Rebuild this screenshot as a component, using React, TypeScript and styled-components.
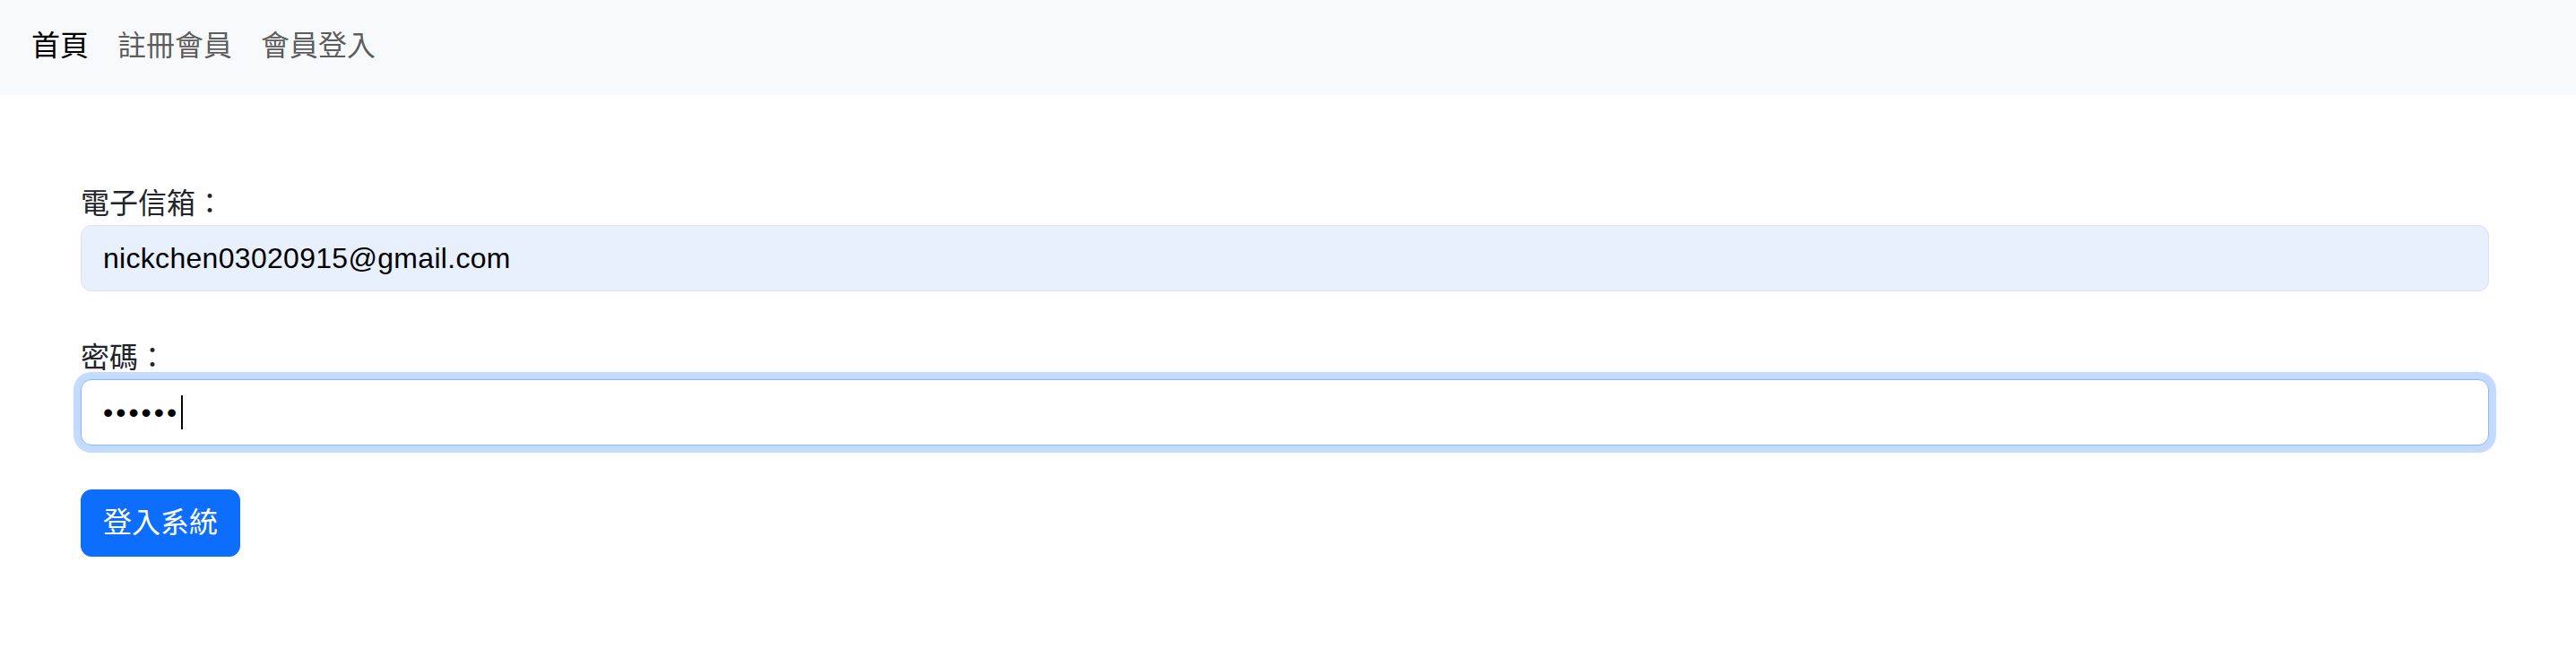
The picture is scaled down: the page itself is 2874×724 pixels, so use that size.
import React from "react";
import styled, { createGlobalStyle } from "styled-components";

const GlobalStyle = createGlobalStyle`
  * { box-sizing: border-box; }
  html, body { margin: 0; padding: 0; background: #ffffff; }
  body {
    font-family: "Liberation Sans", "Noto Sans CJK TC", sans-serif;
    font-size: 32px;
    line-height: 48px;
    color: #212529;
  }
`;

const NavBar = styled.nav`
  height: 106px;
  background: #f8f9fa;
  display: flex;
  align-items: center;
  padding: 0 0 4px 19px;
`;

const NavList = styled.ul`
  display: flex;
  margin: 0;
  padding: 0;
  list-style: none;
`;

const NavLink = styled.a<{ $active?: boolean }>`
  display: block;
  padding: 0 16px;
  text-decoration: none;
  font-size: 32px;
  line-height: 48px;
  color: ${(p) => (p.$active ? "#000000" : "rgba(0, 0, 0, 0.65)")};
`;

const Main = styled.main`
  padding: 97px 97px 0 90px;
`;

const Form = styled.form`
  display: flex;
  flex-direction: column;
  align-items: stretch;
`;

const Field = styled.div<{ $gap?: number }>`
  display: flex;
  flex-direction: column;
  margin-top: ${(p) => p.$gap ?? 0}px;
`;

const Label = styled.label`
  display: block;
  font-size: 32px;
  line-height: 48px;
  color: #212529;
`;

const InputWrap = styled.div`
  position: relative;
`;

const Input = styled.input<{ $autofill?: boolean; $focused?: boolean; $spacing?: number }>`
  display: block;
  width: 100%;
  height: 74px;
  padding: 12px 24px;
  font-family: "Liberation Sans", "Noto Sans CJK TC", sans-serif;
  font-size: 32px;
  line-height: 48px;
  letter-spacing: ${(p) => p.$spacing ?? 0.3}px;
  color: #000000;
  caret-color: #000000;
  background: ${(p) => (p.$autofill ? "#e8f0fe" : "#ffffff")};
  border: 1px solid ${(p) => (p.$focused ? "#86b7fe" : "#dee2e6")};
  border-radius: 12px;
  outline: none;
  box-shadow: ${(p) => (p.$focused ? "0 0 0 8px rgba(13, 110, 253, 0.25)" : "none")};
  &:focus {
    outline: none;
  }
`;

const Caret = styled.span`
  position: absolute;
  left: 112px;
  top: 18px;
  width: 2px;
  height: 38px;
  background: #000000;
  pointer-events: none;
`;

const Actions = styled.div`
  display: flex;
  margin-top: 49px;
`;

const Button = styled.button`
  font-family: "Liberation Sans", "Noto Sans CJK TC", sans-serif;
  font-size: 32px;
  line-height: 49px;
  padding: 12px 24px;
  color: #ffffff;
  background: #0d6efd;
  border: 1px solid #0d6efd;
  border-radius: 12px;
  cursor: pointer;
`;

export default function App() {
  return (
    <>
      <GlobalStyle />
      <NavBar>
        <NavList>
          <li>
            <NavLink href="#" $active>
              首頁
            </NavLink>
          </li>
          <li>
            <NavLink href="#">註冊會員</NavLink>
          </li>
          <li>
            <NavLink href="#">會員登入</NavLink>
          </li>
        </NavList>
      </NavBar>
      <Main>
        <Form onSubmit={(e) => e.preventDefault()}>
          <Field>
            <Label htmlFor="email">電子信箱：</Label>
            <Input
              id="email"
              type="email"
              defaultValue="nickchen03020915@gmail.com"
              $autofill
            />
          </Field>
          <Field $gap={50}>
            <Label htmlFor="password">密碼：</Label>
            <InputWrap>
              <Input
                id="password"
                type="password"
                defaultValue="123456"
                $focused
                $spacing={3}
              />
              <Caret />
            </InputWrap>
          </Field>
          <Actions>
            <Button type="submit">登入系統</Button>
          </Actions>
        </Form>
      </Main>
    </>
  );
}
